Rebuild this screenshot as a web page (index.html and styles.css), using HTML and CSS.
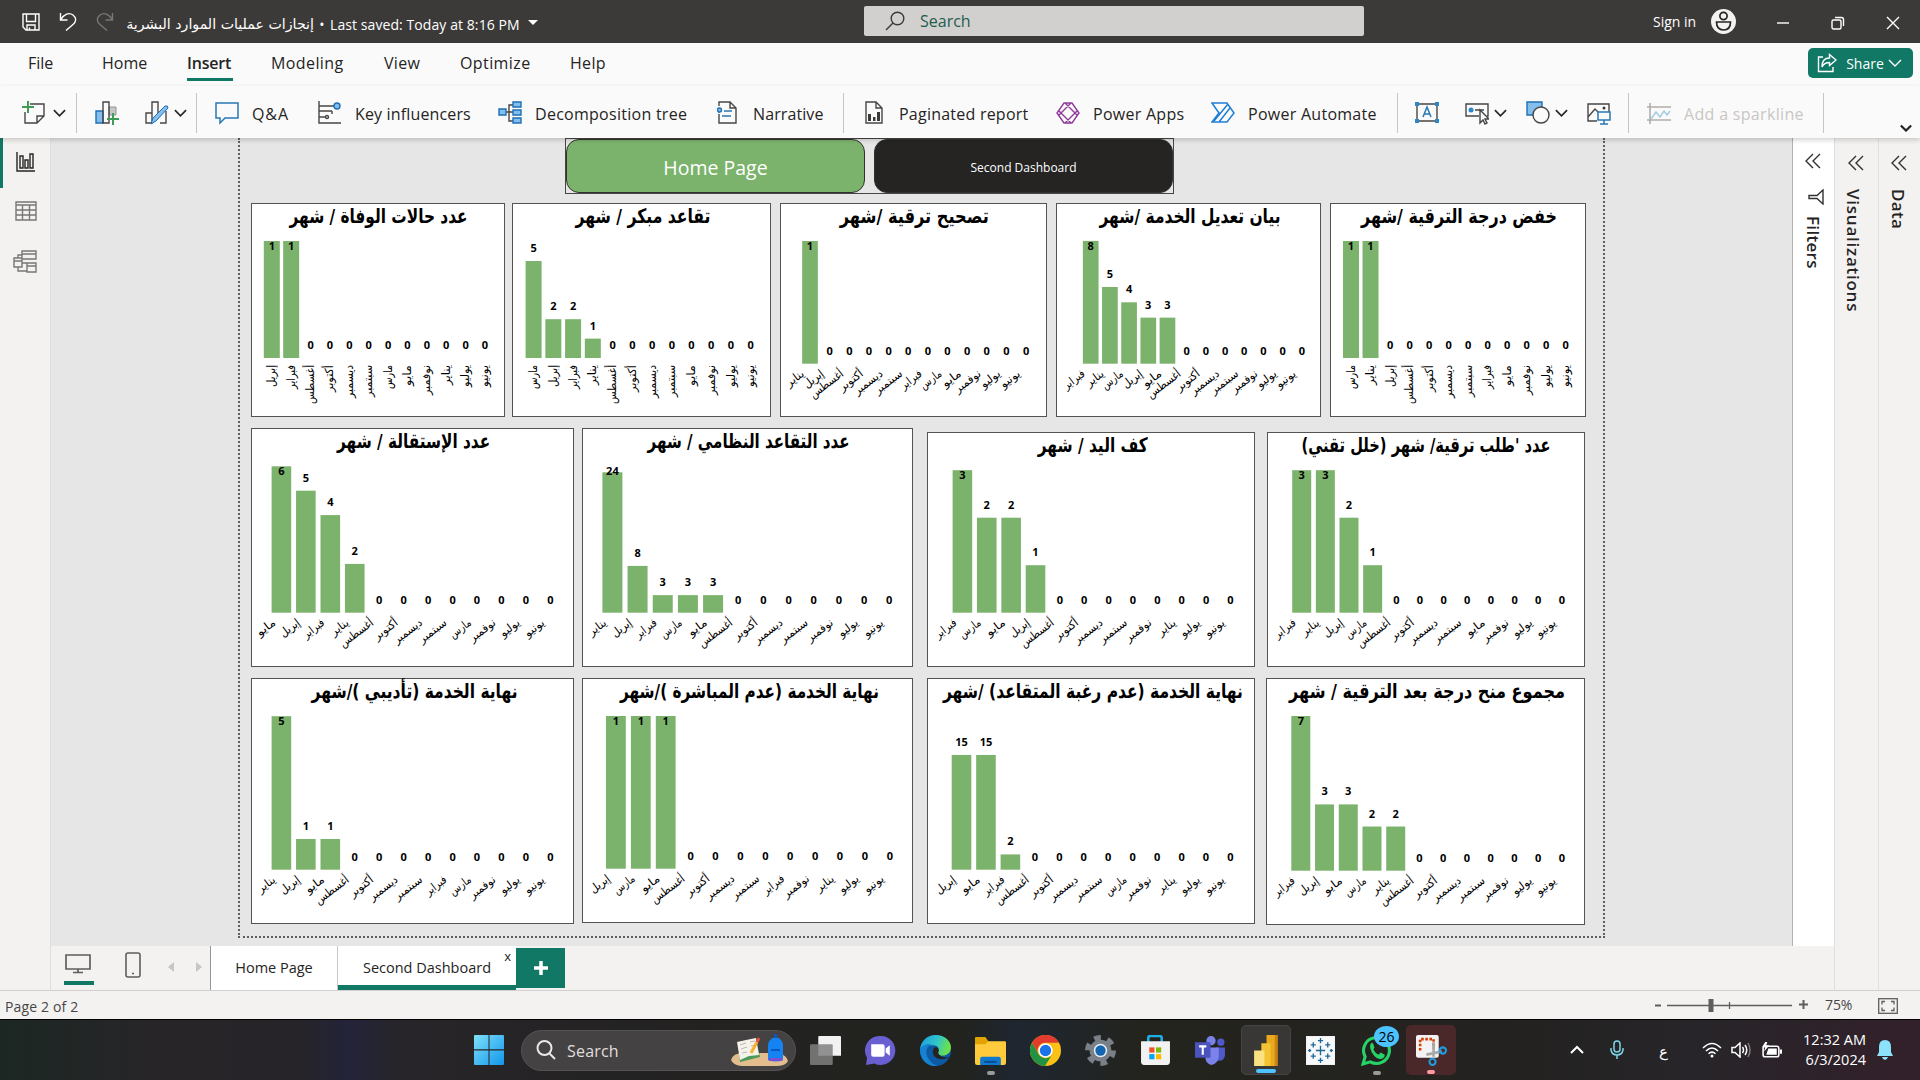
FILE: index.html
```html
<!DOCTYPE html>
<html lang="en">
<head>
<meta charset="utf-8">
<title>Power BI Desktop</title>
<link rel="stylesheet" href="styles.css">
</head>
<body>
<div class="app">
  <header class="titlebar">
    <svg class="ico save" viewBox="0 0 18 18"><path d="M1 1h16v16H4l-3-3zM4.500 1v7.500h9V1M5 17v-5h8v5M7.500 14.500V17"/></svg>
    <svg class="ico undo" viewBox="0 0 18 19"><path d="M1.500 1v7h7M1.800 7.500C5 2 10 0 14 3s3 7 0 9.500L7 18.500"/></svg>
    <svg class="ico redo" viewBox="0 0 18 19"><path d="M16.500 1v7h-7M16.200 7.500C13 2 8 0 4 3s-3 7 0 9.500l7 6"/></svg>
    <span class="doc" dir="rtl">إنجازات عمليات الموارد البشرية</span>
    <span class="dot">•</span>
    <span class="saved">Last saved: Today at 8:16 PM</span>
    <span class="caret"></span>
    <div class="search">
      <svg class="ico" viewBox="0 0 20 20"><circle cx="12.500" cy="7.500" r="6.300"/><path d="M8 12l-7 7"/></svg>
      <span>Search</span>
    </div>
    <span class="signin">Sign in</span>
    <svg class="avatar" viewBox="0 0 25 25"><circle cx="12.500" cy="12.500" r="12.500"/><circle class="ln" cx="12.500" cy="7" r="3.600"/><path class="ln" d="M5.500 13h14c0 5-2.500 8-7 8s-7-3-7-8z"/></svg>
    <svg class="ico win min" viewBox="0 0 14 14"><path d="M1 7h12"/></svg>
    <svg class="ico win restore" viewBox="0 0 14 14"><rect x="1" y="4" width="9" height="9" rx="1.500"/><path d="M4 1.500h6.500q2 0 2 2V10"/></svg>
    <svg class="ico win close" viewBox="0 0 14 14"><path d="M1 1l12 12M13 1L1 13"/></svg>
  </header>

  <nav class="tabs">
    <span class="t-file">File</span><span class="t-home">Home</span><span class="t-insert active">Insert</span><span class="t-model">Modeling</span><span class="t-view">View</span><span class="t-opt">Optimize</span><span class="t-help">Help</span>
    <button class="share">
      <svg viewBox="0 0 20 20"><path d="M6 4H1.500v14.500H16V14M12.500 1.500L19 7l-6.500 5.500V9.500C9 9.500 6.500 11 5 14c0-6 3-9 7.500-9z"/></svg>
      <span>Share</span>
      <svg class="chev" viewBox="0 0 14 8"><path d="M1 1l6 6 6-6"/></svg>
    </button>
  </nav>

  <div class="ribbon">
    <svg class="r newpage" viewBox="0 0 24 24"><path class="g" d="M8 3h14v12l-7 7H3V11M15 22v-7h7"/><path class="gr" d="M6 0v12M0 6h12"/></svg>
    <svg class="chev c1" viewBox="0 0 14 8"><path d="M1 1l6 6 6-6"/></svg>
    <i class="sep s1"></i>
    <svg class="r visual" viewBox="0 0 24 24"><path class="b" d="M1 10h7v12H1z"/><path class="lg" d="M14 6h7v8h-7z"/><path class="g" d="M8 1h6v21H8z"/><path class="gr" d="M18 12v12M12 18h12"/></svg>
    <svg class="r morevis" viewBox="0 0 24 24"><path class="g" d="M1 12h6v10H1zM7 12V1h6v14M15 22h6V10"/><path class="bl" d="M8 17L20 5q3-1 3 2L11 20l-5 3z"/></svg>
    <svg class="chev c2" viewBox="0 0 14 8"><path d="M1 1l6 6 6-6"/></svg>
    <i class="sep s2"></i>
    <svg class="r qa" viewBox="0 0 24 24"><path class="bo" d="M1 2h22v15H10l-5 5v-5H1z"/></svg>
    <span class="lb l-qa">Q&amp;A</span>
    <svg class="r key" viewBox="0 0 24 24"><path class="g" d="M2 0v22h22M2 5h15M2 10h13M15 10v3M2 16h6"/><circle class="g" cx="10" cy="16" r="1.500"/><circle class="b" cx="20" cy="5" r="3"/></svg>
    <span class="lb l-key">Key influencers</span>
    <svg class="r tree" viewBox="0 0 24 24"><path class="g" d="M8 11h7M15 4h-4v16h4"/><path class="b" d="M1 8h7v6H1zM15 1h8v5h-8zM15 9h8v5h-8zM15 17h8v5h-8z"/></svg>
    <span class="lb l-tree">Decomposition tree</span>
    <svg class="r narr" viewBox="0 0 20 24"><path class="g" d="M2 5V1h11l6 6v15H2v-9M13 1v6h6"/><path class="bo" d="M7 10h8M5 15h9M2 12v-1"/><circle class="b" cx="2.500" cy="9" r="2"/></svg>
    <span class="lb l-narr">Narrative</span>
    <i class="sep s3"></i>
    <svg class="r pag" viewBox="0 0 18 24"><path class="g" d="M1 1h10l6 6v15H1zM11 1v6h6"/><path class="dk" d="M3 13h3v7H3zM8 16h2.500v4H8zM12 11h3v9h-3z"/></svg>
    <span class="lb l-pag">Paginated report</span>
    <svg class="r apps" viewBox="0 0 24 24"><path class="pu" d="M8 2h8l7 10-7 10H8L1 12zM9 2l12 12M15 2L3 14M3 10l12 12M21 10L9 22"/></svg>
    <span class="lb l-apps">Power Apps</span>
    <svg class="r auto" viewBox="0 0 24 24"><path class="au" d="M1 2h15l7 10-7 9H1l7-9zM17 3L3 20M19 7L8 21"/></svg>
    <span class="lb l-auto">Power Automate</span>
    <i class="sep s4"></i>
    <svg class="r tbox" viewBox="0 0 24 24"><path class="g" d="M2 3h20v17H2z"/><path class="bo" d="M8 16l4-10 4 10M9.500 13h5"/><path class="bf" d="M0 1h4v4H0zM20 1h4v4h-4zM0 18h4v4H0zM20 18h4v4h-4z"/></svg>
    <svg class="r btn" viewBox="0 0 24 24"><path class="g" d="M14 15H1V3h22v12h-1M10 9h9"/><circle class="bf" cx="6" cy="9" r="2.500"/><path class="g w" d="M15 9v13l3-3 2 4 2-1-2-4h4z"/></svg>
    <svg class="chev c3" viewBox="0 0 14 8"><path d="M1 1l6 6 6-6"/></svg>
    <svg class="r shapes" viewBox="0 0 24 24"><path class="b" d="M1 1h15v13H1z"/><circle class="g w" cx="15" cy="14" r="8"/></svg>
    <svg class="chev c4" viewBox="0 0 14 8"><path d="M1 1l6 6 6-6"/></svg>
    <svg class="r image" viewBox="0 0 24 24"><path class="g" d="M10 20H1V3h21v8M1 16l7-8 6 6"/><circle class="dk" cx="17" cy="7" r="1.500"/><path class="bo w" d="M11 11h12v8H11zM17 19v4M13 23h8"/></svg>
    <i class="sep s5"></i>
    <svg class="r spark" viewBox="0 0 24 24"><path d="M3 2v21M0 6h24M0 19h24" stroke="#b0aeac" stroke-width="1.600"/><path d="M4 18l5-7 4 5 4-6 3 4 3-4" stroke="#a7cbe2" stroke-width="1.500"/></svg>
    <span class="lb l-spark">Add a sparkline</span>
    <i class="sep s6"></i>
    <svg class="chev c5" viewBox="0 0 14 8"><path d="M1 1l6 6 6-6"/></svg>
  </div>

  <main class="work">
    <aside class="views">
      <div class="v on"><svg viewBox="0 0 20 20"><path d="M2 0v19h18M5 4h3v12H5zM10 8h3v8h-3zM15 2h3v14h-3z"/></svg></div>
      <div class="v"><svg viewBox="0 0 22 20"><path d="M1 1h20v18H1zM1 4h20M1 9h20M1 14h20M7.500 4v15M14.500 4v15"/></svg></div>
      <div class="v"><svg viewBox="0 0 24 24"><path d="M9 2h14v8H9zM9 5h14M14 14h9v9h-9zM14 17h9M1 9h8v9H1zM1 12h8M9 14h5M5 9V6h4M5 18v4h9"/></svg></div>
    </aside>

    <section class="center">
      <div class="canvas">
        <div class="page">
          <div class="nav-buttons"><div class="nb home">Home Page</div><div class="nb second">Second Dashboard</div></div>
          <div class="charts row1" id="row1"></div>
          <div class="charts row2" id="row2"></div>
          <div class="charts row3" id="row3"></div>
        </div>
      </div>
      <footer class="pages">
        <div class="desk"><svg viewBox="0 0 26 20"><path d="M1 1h24v14H1zM13 15v3M8 18.500h10"/></svg></div>
        <svg class="phone" viewBox="0 0 16 26"><rect x="1" y="1" width="14" height="24" rx="2"/><path d="M7 21.500h2"/></svg>
        <i class="arr left"></i><i class="arr right"></i>
        <div class="pt first">Home Page</div>
        <div class="pt sel">Second Dashboard<b>x</b></div>
        <div class="add"><svg viewBox="0 0 14 14"><path d="M7 0v14M0 7h14"/></svg></div>
      </footer>
    </section>

    <aside class="pane filters">
      <svg class="dbl" viewBox="0 0 16 16"><path d="M8 1L1 8l7 7M15 1L8 8l7 7"/></svg>
      <svg class="funnel" viewBox="0 0 16 16"><path d="M15 1v14L9 9.500H1v-3h8z"/></svg>
      <span>Filters</span>
    </aside>
    <aside class="pane viz"><svg class="dbl" viewBox="0 0 16 16"><path d="M8 1L1 8l7 7M15 1L8 8l7 7"/></svg><span>Visualizations</span></aside>
    <aside class="pane data"><svg class="dbl" viewBox="0 0 16 16"><path d="M8 1L1 8l7 7M15 1L8 8l7 7"/></svg><span>Data</span></aside>
  </main>

  <div class="status">
    <span class="pg">Page 2 of 2</span>
    <svg class="zoom" viewBox="0 0 156 16"><path d="M1 8.500h6M145 7.500h9M149.500 3v9" stroke-width="2"/><path d="M13 8.500h125M75.500 5v7" stroke-width="1.300"/><path d="M57 2v13" stroke-width="5"/></svg>
    <span class="pct">75%</span>
    <svg class="fit" viewBox="0 0 20 16"><rect x=".7" y=".7" width="18.600" height="14.600"/><path d="M4 6.500V3.500h3M13 3.500h3v3M16 9.500v3h-3M7 12.500H4v-3"/></svg>
  </div>

  <footer class="taskbar">
    <svg class="tk start" viewBox="0 0 30 30"><defs><linearGradient id="wn" x1="0" y1="0" x2="1" y2="1"><stop offset="0" stop-color="#7fe0fb"/><stop offset="1" stop-color="#1196ea"/></linearGradient></defs><path fill="url(#wn)" d="M1 0h13.500v14.300H0V1q0-1 1-1zM15.500 0H29q1 0 1 1v13.300H15.500zM0 15.500h14.500V30H1q-1 0-1-1zM15.500 15.500H30V29q0 1-1 1H15.500z"/></svg>
    <div class="tsearch">
      <svg class="mag" viewBox="0 0 20 20"><circle cx="8.500" cy="8" r="7"/><path d="M13.500 13.500L19 19"/></svg>
      <span>Search</span>
      <svg class="art" viewBox="0 0 58 32"><path fill="#e3bd8e" d="M0 26q2-7 12-7h34q10 2 11 8-2 5-12 5H10Q2 31 0 26z"/><path fill="#4c9a57" d="M7 9l18-4 4 18-20 5z"/><path fill="#f5f2e8" d="M6 8l9-2 10-2 3 17-10 1-9 4z"/><path stroke="#b9b4c6" d="M9 11l6-2M10 15l6-2M11 19l5-1M19 8l5-1M20 12l5-1"/><path stroke="#f5b32d" stroke-width="3" d="M20 19l6-11"/><path stroke="#e5533d" stroke-width="3" d="M26 8l2-4"/><path fill="#1683f2" d="M37 26V12q0-7 7.500-9 7.500 2 7.500 9v14q-7 3-15 0z"/><path fill="#0b55c4" d="M40 15h9v2h-9zM43 0h3v4h-3z"/><path fill="#7a4fd6" d="M38 24h13v3H38z"/></svg>
    </div>
    <svg class="tk tview" viewBox="0 0 30 30"><path fill="#f2f2f2" d="M9 1h20q1 0 1 1v18H8V2q0-1 1-1z"/><path fill="#808080" fill-opacity=".85" d="M1 9h20q1 0 1 1v18q0 1-1 1H1q-1 0-1-1V10q0-1 1-1z"/></svg>
    <svg class="tk chat" viewBox="0 0 30 30"><path fill="#6a5fd0" d="M15 1a14 14 0 1 1-6 26.500L1 29l1-7A14 14 0 0 1 15 1z"/><path fill="#fff" d="M6 9h11q2 0 2 2v8q0 2-2 2H8q-2 0-2-2zM20 13l4-3v10l-4-3z"/></svg>
    <svg class="tk edge" viewBox="0 0 30 30"><defs><linearGradient id="eg" x1="0" y1="0" x2="1" y2=".3"><stop offset="0" stop-color="#1a9be0"/><stop offset=".6" stop-color="#30c6c8"/><stop offset="1" stop-color="#6be04c"/></linearGradient></defs><circle cx="15" cy="15" r="15" fill="#0c59a4"/><path fill="url(#eg)" d="M0 14C1 5 8 0 15 0c9 0 15 6 15 12 0 5-4 8-9 8-4 0-5-2-3-4 1-4-2-6-5-6C6 10 1 12 0 14z"/><path fill="#1683d2" d="M0 14c1-3 6-6 11-5-5 2-7 9-2 15 2 3 5 5 8 6C7 31 0 24 0 14z"/><path fill="#262423" d="M14 12c-3 3-2 9 4 11 4 1 8 0 11-2-3 1-7 1-9-1-2-1-3-3-2-4 1-3-2-5-4-4z"/></svg>
    <div class="tk expl"><svg viewBox="0 0 30 30"><path fill="#e2a300" d="M0 3q0-1 1-1h9l3 4v5H0z"/><path fill="#ffcb3d" d="M0 9h10l3-3h16q1 0 1 1v20q0 2-2 2H2q-2 0-2-2z"/><path fill="#1079ce" d="M5 29v-6q0-2 2-2h16q2 0 2 2v6z"/><path fill="#0b4d91" d="M9 25h12v2H9z"/></svg></div>
    <svg class="tk chrome" viewBox="0 0 30 30"><circle cx="15" cy="15" r="15" fill="#fbc116"/><path fill="#e33b2e" d="M2 7.500A15 15 0 0 1 28 7.500H15A7.500 7.500 0 0 0 8.500 19z"/><path fill="#229342" d="M2 7.500l6.500 11.250A7.500 7.500 0 0 0 21 19.500L14.500 30A15 15 0 0 1 2 7.500z"/><circle cx="15" cy="15" r="7" fill="#fff"/><circle cx="15" cy="15" r="5.500" fill="#1a73e8"/></svg>
    <svg class="tk gear" viewBox="0 0 30 30"><circle cx="15" cy="15" r="10.500" fill="#7a8087"/><circle cx="15" cy="15" r="12.500" fill="none" stroke="#7a8087" stroke-width="5" stroke-dasharray="6.500 6.590"/><circle cx="15" cy="15" r="6.500" fill="#e9eef2"/><circle cx="15" cy="15" r="5" fill="#1266b1"/></svg>
    <svg class="tk store" viewBox="0 0 30 30"><path d="M8 7V3q0-2 2-2h9q2 0 2 2v4" fill="none" stroke="#20aee8" stroke-width="2.500"/><path fill="#f2f2f2" d="M1 6h28v20q0 3-3 3H4q-3 0-3-3z"/><path fill="#f25022" d="M9 12h5v5H9z"/><path fill="#7fba00" d="M15.500 12h5v5h-5z"/><path fill="#00a4ef" d="M9 18.500h5v5H9z"/><path fill="#ffb900" d="M15.500 18.500h5v5h-5z"/></svg>
    <svg class="tk teams" viewBox="0 0 30 30"><circle cx="15.500" cy="5.500" r="4.500" fill="#7b83eb"/><circle cx="25" cy="7" r="3.500" fill="#5059c9"/><path fill="#5059c9" d="M20 12h9v8q-1 5-6 5h-3z"/><path fill="#7b83eb" d="M10 12h13v9q-1 7-7 8-6-1-6-8z"/><path fill="#4b53bc" d="M0 7h15v15H0z"/><path fill="none" stroke="#fff" stroke-width="2" d="M4 11h7M7.500 11v8"/></svg>
    <div class="tk pbi"><svg viewBox="0 0 30 30"><path fill="#c98312" d="M17 0h9v30h-9z"/><path fill="#e8a91c" d="M15 0h8v30h-8z"/><path fill="#f2c332" d="M10 8h9v22h-9z"/><path fill="#fce182" d="M3 15h10v15H3z"/></svg></div>
    <svg class="tk tabl" viewBox="0 0 30 30"><path fill="#f7f8fa" d="M1 1h28v28H1z"/><path fill="none" stroke="#1f6a94" stroke-width="1.300" d="M15 10.500v9M10.500 15h9M15 3v5M12.500 5.500h5M15 22v5M12.500 24.500h5M8 7v5M5.500 9.500h5M22 7v5M19.500 9.500h5M8 18v5M5.500 20.500h5M22 18v5M19.500 20.500h5M4.500 13.500v3M3 15h3M25.500 13.500v3M24 15h3"/></svg>
    <div class="tk wa"><svg viewBox="0 0 30 30"><path fill="#22231f" stroke="#25d366" stroke-width="3" d="M2 28l2-7A12.500 12.500 0 1 1 9 26z"/><path fill="#25d366" d="M9 9q2-3 3 0l1 3-1 2q2 4 5 5l2-2 4 2q0 3-3 4-4 1-8-4-4-5-3-10z"/></svg><b>26</b></div>
    <div class="tk snip"><svg viewBox="0 0 30 30"><path fill="#f3f3f3" d="M2 0h18q2 0 2 2v18q0 2-2 2H2q-2 0-2-2V2q0-2 2-2z"/><path fill="none" stroke="#d83b01" stroke-width="2.500" stroke-dasharray="2.500 1.500" d="M4 15V4h13v9"/><path stroke="#a8a8a8" stroke-width="2.500" d="M17 7v14M10 19l15-3"/><circle cx="26" cy="15" r="3" fill="none" stroke="#1b9de2" stroke-width="2"/><circle cx="16" cy="26" r="3" fill="none" stroke="#1b9de2" stroke-width="2"/></svg></div>
    <svg class="tr up" viewBox="0 0 14 14"><path d="M1 10l6-6 6 6"/></svg>
    <svg class="tr mic" viewBox="0 0 14 20"><rect x="4" y="1" width="6" height="11" rx="3"/><path d="M1 8v2q1 5 6 5t6-5V8M7 15v4"/></svg>
    <span class="lang">ع</span>
    <svg class="tr wifi" viewBox="0 0 20 16"><path d="M1 6q9-9 18 0M4 9q6-6 12 0M6.500 11.800q3.500-3.300 7 0"/><circle cx="10" cy="14" r="1.500"/></svg>
    <svg class="tr vol" viewBox="0 0 20 16"><path d="M1 5.500h3L9 1v14l-5-4.500H1zM11.500 5q2 3 0 6M14 3q3.500 5 0 10"/><path d="M17 1q4 7 0 14" opacity=".4"/></svg>
    <svg class="tr bat" viewBox="0 0 20 16"><rect x="2" y="4" width="15" height="10" rx="2"/><path class="f" d="M7 6h8v6H5zM18 7h2v4h-2zM4 0l-3 5h3l-1 4 5-6H5l1-3z"/></svg>
    <div class="clock"><span>12:32 AM</span><span>6/3/2024</span></div>
    <svg class="tr bell" viewBox="0 0 16 20"><path d="M8 0q6 0 6 7v5l2 4H0l2-4V7q0-7 6-7zM5 17h6q-1 3-3 3t-3-3z"/></svg>
  </footer>
</div>
<script src="charts.js"></script>
</body>
</html>
```

FILE: styles.css
```css
* { box-sizing: border-box; }
body { margin: 0; font-family: "Open Sans", "Noto Sans", "DejaVu Sans", sans-serif; color: #252423; overflow: hidden; }
svg { display: block; flex: none; fill: none; }
.app { width: 1920px; height: 1080px; display: flex; flex-direction: column; }
span { white-space: nowrap; }

/* title bar */
.titlebar { height: 43px; background: #3b3a39; color: #fff; display: flex; align-items: center; flex: none; font-size: 14px; }
.titlebar > * { flex: none; }
.ico { stroke: #fff; stroke-width: 1.4; }
.save { width: 18px; height: 18px; margin-left: 22px; }
.undo { width: 18px; height: 19px; margin-left: 19px; }
.redo { width: 18px; height: 19px; margin-left: 19px; stroke: #797775; }
.doc { width: 187px; margin-left: 13px; margin-top: 5px; font-family: "DejaVu Sans", sans-serif; font-size: 14.2px; }
.dot { width: 16px; text-align: center; margin-top: 5px; }
.saved { width: 190px; margin-top: 5px; letter-spacing: .08px; }
.caret { border: 5.500px solid transparent; border-top-color: #fff; border-bottom: 0; margin: 2px 0 0 8px; }
.search { width: 500px; height: 30px; margin-left: 326px; margin-top: -1px; background: #d2d0ce; border-radius: 2px; display: flex; align-items: center; gap: 15px; padding-left: 21px; color: #1f5c50; font-size: 16px; }
.search .ico { width: 20px; height: 20px; stroke: #3b3a39; }
.signin { width: 47px; margin-left: 289px; }
.avatar { width: 25px; height: 25px; margin-left: 11px; fill: #f3f2f1; }
.avatar .ln { fill: none; stroke: #252423; stroke-width: 1.7; }
.win { width: 14px; height: 14px; margin-top: 2px; }
.min { margin-left: 40px; } .restore { margin-left: 41px; } .close { margin-left: 41px; }

/* ribbon tabs */
.tabs { height: 43px; background: #fafafa; display: flex; flex: none; font-size: 16px; padding-left: 28px; line-height: 40px; }
.tabs span { height: 38px; }
.t-file { width: 74px; } .t-home { width: 85px; }
.t-insert { width: 46px; margin-right: 38px; font-weight: 600; border-bottom: 3px solid #117865; letter-spacing: -.2px; }
.t-model { width: 113px; letter-spacing: .4px; } .t-view { width: 76px; letter-spacing: .3px; } .t-opt { width: 110px; letter-spacing: .4px; } .t-help { width: 40px; letter-spacing: .3px; }
.share { margin: 5px 0 0 auto; margin-right: 7px; width: 105px; height: 30px; background: #117865; border: 0; border-radius: 5px; display: flex; align-items: center; padding: 0 0 0 9px; color: #fff; font: 14px "Open Sans", sans-serif; }
.share svg { width: 20px; height: 20px; stroke: #fff; stroke-width: 1.4; }
.share span { height: auto; width: 38px; margin-left: 9px; }
.share .chev { width: 14px; height: 8px; margin-left: 4px; }

/* ribbon */
.ribbon { height: 52px; padding-top: 2px; background: #fafafa; display: flex; align-items: center; flex: none; position: relative; z-index: 2; box-shadow: 0 2px 5px rgba(0,0,0,.18); font-size: 16px; }
.ribbon::before { content: ""; width: 22px; flex: none; }
.r { width: 24px; height: 24px; }
.chev { width: 13px; height: 8px; stroke: #252423; stroke-width: 1.8; }
.sep { width: 1px; height: 40px; background: #c8c6c4; flex: none; }
.g { stroke: #484644; stroke-width: 1.4; }
.gr { stroke: #3f9b58; stroke-width: 2; }
.b { fill: #83beec; stroke: #1e6fb5; stroke-width: 1.4; }
.bl { fill: #83beec; stroke: #1e6fb5; stroke-width: 1; }
.bo { stroke: #2878b5; stroke-width: 1.5; }
.bf { fill: #2b88c8; }
.lg { fill: #c8c6c4; stroke: #979593; }
.dk { fill: #3b3a39; }
.w { fill: #fafafa; }
.pu { stroke: #8f3a9b; stroke-width: 1.4; }
.au { stroke: #1f7fd6; stroke-width: 1.5; }
.c1 { margin-left: 7px; } .s1 { margin-left: 10px; }
.visual { margin-left: 18px; } .morevis { margin-left: 26px; } .c2 { margin-left: 5px; }
.s2 { margin-left: 9px; } .qa { margin-left: 18px; }
.lb { flex: none; padding-top: 1px; }
.l-qa { width: 40px; margin-left: 13px; letter-spacing: .9px; } .key { margin-left: 25px; }
.l-key { width: 117px; margin-left: 14px; letter-spacing: .15px; } .tree { margin-left: 26px; }
.l-tree { width: 154px; margin-left: 13px; letter-spacing: .27px; }
.narr { width: 20px; margin-left: 28px; } .l-narr { width: 72px; margin-left: 16px; letter-spacing: .1px; }
.s3 { margin-left: 18px; } .pag { width: 18px; margin-left: 21px; }
.l-pag { width: 131px; margin-left: 16px; letter-spacing: .23px; } .apps { margin-left: 26px; }
.l-apps { width: 92px; margin-left: 13px; letter-spacing: .27px; } .auto { margin-left: 26px; }
.l-auto { width: 130px; margin-left: 13px; letter-spacing: .27px; } .s4 { margin-left: 19px; }
.tbox { margin-left: 17px; } .btn { margin-left: 26px; } .c3 { margin-left: 5px; }
.shapes { margin-left: 19px; } .c4 { margin-left: 5px; } .image { margin-left: 19px; }
.s5 { margin-left: 17px; } .spark { margin-left: 18px; }
.l-spark { width: 122px; margin-left: 13px; color: #c8c6c4; letter-spacing: .32px; } .s6 { margin-left: 17px; }
.c5 { width: 12px; margin: 30px 0 0 76px; stroke-width: 2.5; }

/* work area */
.work { height: 853px; display: flex; flex: none; background: #f3f2f1; border-bottom: 1px solid #d2d0ce; }
.views { width: 51px; border-right: 1px solid #e1dfdd; flex: none; }
.v { height: 50px; display: flex; align-items: center; padding-left: 15px; }
.v svg { width: 22px; height: 20px; stroke: #797775; stroke-width: 1.4; }
.v:last-child svg { width: 24px; height: 24px; margin-left: -2px; }
.v.on { border-left: 3px solid #117865; padding-left: 12px; margin-bottom: -2px; }
.v.on svg { width: 20px; margin-top: -3px; stroke: #252423; }
.center { width: 1741px; flex: none; }
.canvas { height: 808px; background: #e6e6e6; padding-left: 187px; }
.page { width: 1367px; height: 800px; border: 2px dotted #605e5c; border-top: 0; }
.nav-buttons { width: 609px; height: 56px; margin-left: 325px; border: 1px solid #484644; display: flex; justify-content: space-between; color: #fff; }
.nb { width: 299px; height: 54px; border: 1px solid #323130; border-radius: 13px; display: flex; align-items: center; justify-content: center; }
.home { background: #7cb36c; font-size: 19.5px; padding-top: 3px; }
.second { background: #252423; font-size: 12px; padding-top: 3px; }
.charts { display: grid; align-items: start; }
.row1 { grid-template-columns: 261px 268px 276px 274px 256px; margin: 9px 0 0 11px; height: 225px; }
.row2 { grid-template-columns: 331px 345px 340px 318px; margin-left: 11px; height: 250px; }
.row3 { grid-template-columns: 331px 345px 339px 319px; margin-left: 11px; }
.row2 .card:nth-child(n+3) { margin-top: 4px; }
.card { background: #fff; width: fit-content; box-shadow: inset 0 0 0 1px #55524f; }
.card svg { fill: #000; overflow: visible; }
.title { font: bold 20px "DejaVu Sans", sans-serif; text-anchor: middle; direction: rtl; }
.val { font: bold 11px "Open Sans", sans-serif; text-anchor: middle; }
.month { font: 11.5px "DejaVu Sans", sans-serif; text-anchor: end; }
.bar { fill: #7cb36c; }

/* page tabs */
.pages { height: 44px; display: flex; font-size: 14px; }
.desk { width: 30px; height: 39px; margin-left: 13px; border-bottom: 4px solid #117865; padding: 8px 0 0 1px; }
.desk svg { width: 26px; height: 20px; stroke: #605e5c; stroke-width: 1.7; }
.phone { width: 16px; height: 26px; margin: 6px 0 0 31px; stroke: #605e5c; stroke-width: 1.6; }
.arr { border: 5.500px solid transparent; height: 0; margin-top: 16px; }
.arr.left { border-right: 6px solid #c8c6c4; border-left: 0; margin-left: 27px; }
.arr.right { border-left: 6px solid #c8c6c4; border-right: 0; margin-left: 22px; }
.pt { background: #fff; text-align: center; line-height: 43px; }
.first { width: 128px; margin-left: 8px; border-left: 1px solid #979593; border-right: 1px solid #c8c6c4; font-size: 14.5px; }
.sel { width: 178px; border-bottom: 5px solid #117865; position: relative; font-weight: 500; font-size: 14.5px; }
.sel b { position: absolute; right: 5px; top: -11px; font-weight: 500; font-size: 13px; }
.add { width: 49px; height: 40px; margin-top: 2px; background: #117865; display: grid; place-items: center; }
.add svg { width: 14px; height: 14px; stroke: #fff; stroke-width: 3.500; }

/* side panes */
.pane { display: flex; flex-direction: column; align-items: center; border-left: 1px solid #e1dfdd; font-size: 17px; font-weight: 600; flex: none; }
.pane span { writing-mode: vertical-rl; line-height: 24px; margin-right: 2px; }
.filters { width: 42px; height: 808px; background: #fff; border-left-color: #b3b0ad; letter-spacing: .3px; }
.viz { width: 44px; letter-spacing: .75px; } .data { width: 42px; letter-spacing: .3px; }
.dbl { width: 16px; height: 16px; margin-top: 17px; margin-right: 2px; stroke: #323130; stroke-width: 1.4; }
.filters .dbl { margin-top: 15px; margin-right: 1px; }
.funnel { width: 16px; height: 16px; margin: 20px 0 11px 4px; stroke: #323130; stroke-width: 1.4; }
.viz span { margin-top: 18px; margin-right: 7px; }
.data span { margin-top: 18px; margin-right: 4px; }

/* status bar */
.status { height: 28px; background: #f3f2f1; display: flex; align-items: center; flex: none; font-size: 14px; color: #484644; }
.pg { width: 76px; margin-left: 5px; letter-spacing: .15px; margin-top: 2px; }
.zoom { width: 156px; height: 16px; margin-left: 1573px; stroke: #605e5c; }
.pct { width: 30px; margin-left: 15px; font-size: 14px; letter-spacing: -.1px; margin-top: -2px; }
.fit { width: 20px; height: 16px; margin-left: 23px; stroke: #605e5c; stroke-width: 1.3; margin-top: 1px; }

/* taskbar */
.taskbar { height: 61px; border-top: 1px solid #000; background: linear-gradient(90deg, #1c2723 0, #272528 150px, #262428 300px, #23233a 350px, #272529 400px, #232221 700px, #22231f 960px, #1e2630 1020px, #24241e 1140px, #232220 1500px, #272529 1700px, #33202a 1920px); display: flex; align-items: center; color: #fff; }
.tk { width: 31px; height: 31px; margin-left: 24px; flex: none; }
.start { width: 30px; height: 30px; margin-left: 474px; }
.tsearch { width: 275px; height: 41px; margin-left: 17px; border-radius: 21px; background: #444242; border: 1px solid #555353; display: flex; align-items: center; font-size: 16px; color: #e1dfdd; flex: none; }
.mag { width: 20px; height: 20px; margin-left: 14px; stroke: #e8e8e8; stroke-width: 2; }
.tsearch span { width: 52px; margin-left: 11px; margin-top: 2px; letter-spacing: .2px; }
.art { width: 58px; height: 32px; margin-left: 112px; }
.tview { margin-left: 14px; }
.expl { position: relative; }
.pbi, .snip { width: 50px; height: 50px; margin-left: 15px; border-radius: 5px; display: grid; place-items: center; position: relative; }
.pbi { background: #383736; border: 1px solid #454443; }
.pbi + .tk { margin-left: 14px; }
.pbi svg, .snip svg { width: 31px; height: 31px; }
.snip { background: #4a2729; margin-left: 14px; }
.wa { position: relative; margin-left: 25px; }
.wa b { position: absolute; left: 13px; top: -9px; width: 25px; height: 21px; border-radius: 50%; background: #4cc2ff; color: #000; font: 14px/21px "Open Sans", sans-serif; text-align: center; }
.pbi::after, .snip::after, .wa::after, .expl::after { content: ""; position: absolute; left: 50%; bottom: 1px; width: 8px; height: 4px; margin-left: -4px; border-radius: 2px; background: #9a9a9a; }
.pbi::after { width: 20px; margin-left: -10px; background: #4cc2ff; }
.snip::after { background: #ff99a4; }
.wa::after, .expl::after { bottom: -9px; }
.tr { stroke: #fff; stroke-width: 1.5; }
.up { width: 14px; height: 14px; margin-left: 114px; stroke-width: 2; }
.mic { width: 14px; height: 20px; margin-left: 26px; stroke: #7fd4e8; }
.lang { width: 12px; margin-left: 35px; margin-top: 3px; font: 15px "DejaVu Sans", sans-serif; }
.wifi { width: 20px; height: 16px; margin-left: 31px; } .wifi circle { fill: #fff; stroke: none; }
.vol { width: 20px; height: 16px; margin-left: 9px; }
.bat { width: 21px; height: 17px; margin-left: 10px; } .f { fill: #fff; stroke: none; }
.clock { width: 72px; margin-left: 12px; display: flex; flex-direction: column; align-items: flex-end; font-size: 14.5px; line-height: 20px; }
.bell { width: 16px; height: 20px; margin-left: 11px; fill: #8be3fb; stroke: none; }
```

FILE: charts.js
```js
const NAMES = {
  jan: "يناير", feb: "فبراير", mar: "مارس", apr: "إبريل", may: "مايو", jun: "يونيو",
  jul: "يوليو", aug: "أغسطس", sep: "سبتمبر", oct: "أكتوبر", nov: "نوفمبر", dec: "ديسمبر"
};
const LENGTHS = { jan: 20, feb: 24, mar: 24, apr: 22, may: 21, jun: 22, jul: 22, aug: 39, sep: 32, oct: 27, nov: 30, dec: 33 };

const ROWS = {
  row1: [
    { title: "عدد حالات الوفاة / شهر", w: 254, h: 214, tx: 127.5, tl: 178, first: 20.8, pitch: 19.38, bar: 16, base: 155, unit: 117, vertical: true,
      months: "apr feb aug oct dec sep mar may nov jan jul jun", values: [1, 1] },
    { title: "تقاعد مبكر / شهر", w: 259, h: 214, tx: 131, tl: 135, first: 21.6, pitch: 19.74, bar: 16, base: 155, unit: 19.4, vertical: true,
      months: "mar apr feb jan aug oct dec sep may nov jul jun", values: [5, 2, 2, 1] },
    { title: "تصحيح ترقية /شهر", w: 267, h: 214, tx: 134.3, tl: 149, first: 30, pitch: 19.64, bar: 15.7, base: 160.7, unit: 122.7,
      months: "jan apr aug oct dec sep feb mar may nov jul jun", values: [1] },
    { title: "بيان تعديل الخدمة /شهر", w: 265, h: 214, tx: 134, tl: 181, first: 34.7, pitch: 19.19, bar: 15.7, base: 160.7, unit: 15.35,
      months: "feb jan mar apr may aug oct dec sep nov jul jun", values: [8, 5, 4, 3, 3] },
    { title: "خفض درجة الترقية /شهر", w: 256, h: 214, tx: 129, tl: 196, first: 21, pitch: 19.52, bar: 16, base: 155, unit: 117, vertical: true,
      months: "mar jan apr aug oct dec sep feb may nov jul jun", values: [1, 1] }
  ],
  row2: [
    { title: "عدد الإستقالة / شهر", w: 323, h: 239, tx: 162.6, tl: 153, first: 30.4, pitch: 24.45, bar: 19.6, base: 184.7, unit: 24.4,
      months: "may apr feb jan aug oct dec sep mar nov jul jun", values: [6, 5, 4, 2] },
    { title: "عدد التقاعد النظامي / شهر", w: 331, h: 239, tx: 166.6, tl: 202, first: 30.4, pitch: 25.17, bar: 20, base: 184.7, unit: 5.85,
      months: "jan apr feb mar may aug oct dec sep nov jul jun", values: [24, 8, 3, 3, 3] },
    { title: "كف اليد / شهر", w: 328, h: 235, tx: 165.8, tl: 110, first: 35.4, pitch: 24.37, bar: 19.6, base: 180.7, unit: 47.5,
      months: "feb mar may apr aug oct dec sep nov jan jul jun", values: [3, 2, 2, 1] },
    { title: "عدد 'طلب ترقية/ شهر (خلل تقني)", w: 318, h: 235, tx: 159, tl: 249, first: 34.7, pitch: 23.65, bar: 19, base: 180.7, unit: 47.5,
      months: "feb jan apr mar aug oct dec sep may nov jul jun", values: [3, 3, 2, 1] }
  ],
  row3: [
    { title: "نهاية الخدمة (تأديبي )/شهر", w: 323, h: 246, tx: 163.5, tl: 206, first: 30.4, pitch: 24.45, bar: 19.6, base: 191.7, unit: 30.7,
      months: "jan apr may aug oct dec sep feb mar nov jul jun", values: [5, 1, 1] },
    { title: "نهاية الخدمة (عدم المباشرة )/شهر", w: 331, h: 245, tx: 167.4, tl: 259, first: 33.9, pitch: 24.9, bar: 19.8, base: 190.7, unit: 152.7,
      months: "apr mar may aug oct dec sep feb nov jan jul jun", values: [1, 1, 1] },
    { title: "نهاية الخدمة (عدم رغبة المتقاعد) /شهر", w: 328, h: 246, tx: 165.9, tl: 300, first: 34.5, pitch: 24.45, bar: 19.6, base: 191.7, unit: 7.65,
      months: "apr may feb aug oct dec sep mar nov jan jul jun", values: [15, 15, 2] },
    { title: "مجموع منح درجة بعد الترقية / شهر", w: 319, h: 247, tx: 161, tl: 276, first: 34.8, pitch: 23.73, bar: 19, base: 192.7, unit: 22.1,
      months: "feb apr may mar jan aug oct dec sep nov jul jun", values: [7, 3, 3, 2, 2] }
  ]
};

function drawChart(c) {
  let out = `<text class="title" x="${c.tx}" y="19.700" textLength="${c.tl}" lengthAdjust="spacingAndGlyphs">${c.title}</text>`;
  c.months.split(" ").forEach((m, i) => {
    const value = c.values[i] || 0;
    const cx = c.first + i * c.pitch;
    const top = c.base - value * c.unit;
    if (value) out += `<rect class="bar" x="${cx - c.bar / 2}" y="${top}" width="${c.bar}" height="${value * c.unit}"/>`;
    out += `<text class="val" x="${cx}" y="${Math.max(top - 13, 43) + 4}">${value}</text>`;
    const spot = c.vertical
      ? `translate(${cx + 3.5} ${c.base + 7}) rotate(-90)`
      : `translate(${cx - 5} ${c.base + 11.5}) rotate(-37)`;
    out += `<text class="month" transform="${spot}" textLength="${LENGTHS[m]}" lengthAdjust="spacingAndGlyphs">${NAMES[m]}</text>`;
  });
  return `<div class="card"><svg width="${c.w}" height="${c.h}" viewBox="0 0 ${c.w} ${c.h}">${out}</svg></div>`;
}

for (const [id, list] of Object.entries(ROWS)) {
  document.getElementById(id).innerHTML = list.map(drawChart).join("");
}
```
